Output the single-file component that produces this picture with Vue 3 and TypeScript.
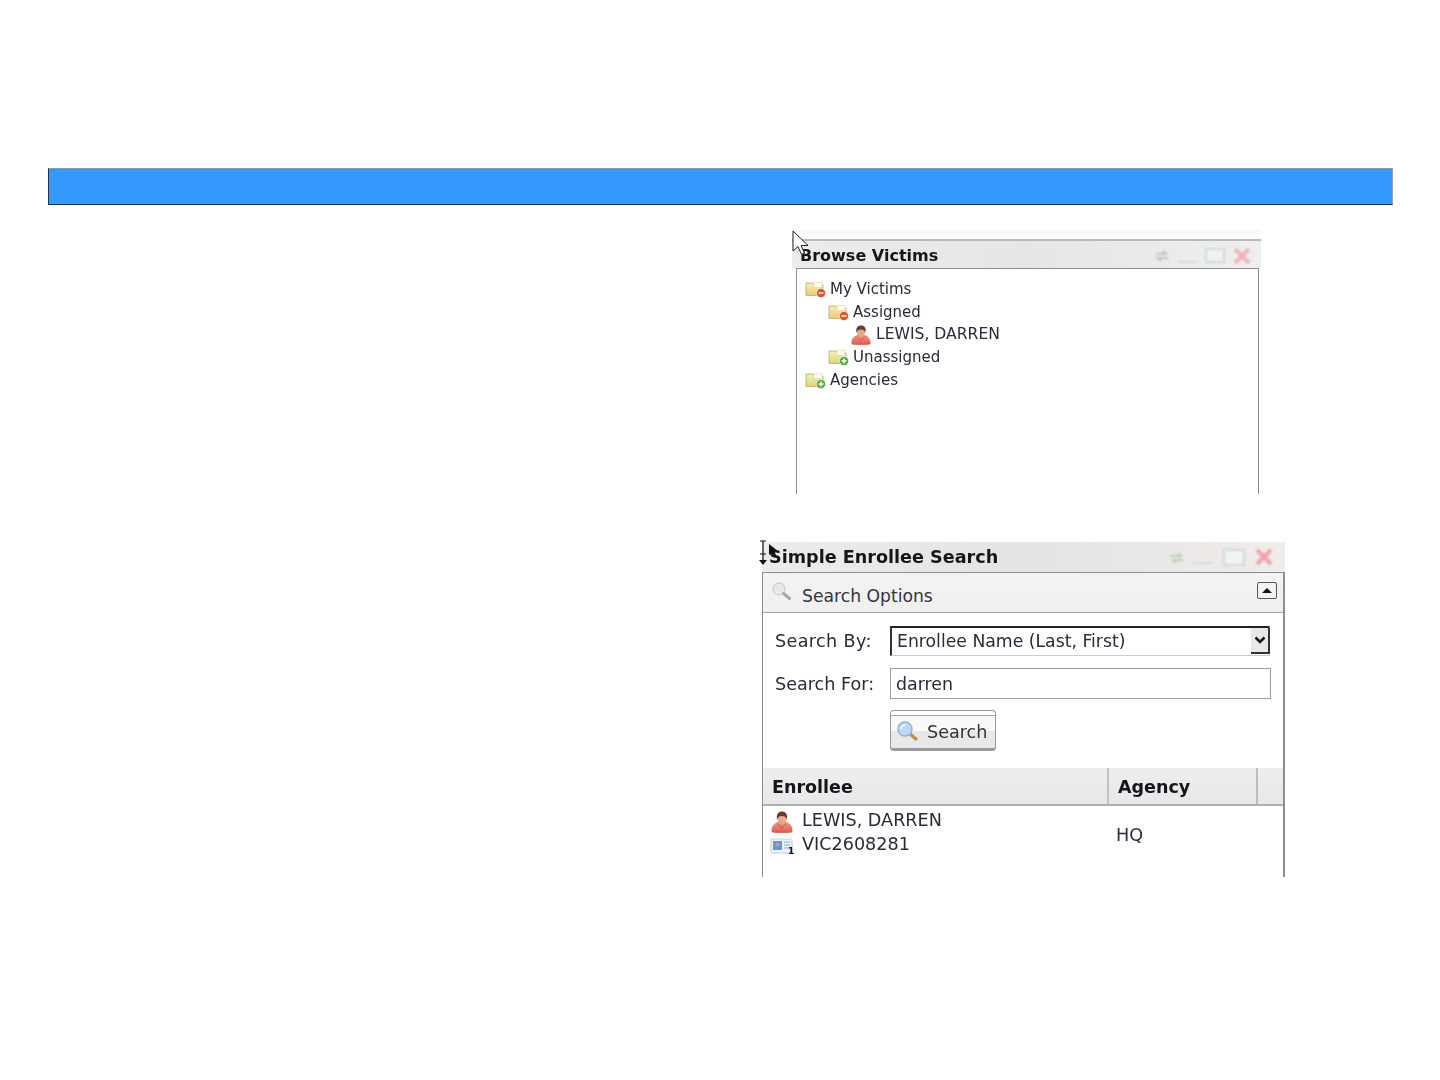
<script setup lang="ts">
interface TreeRow { label: string; level: number; icon: 'minus' | 'plus' | 'person' }
const rows: TreeRow[] = [
  { label: 'My Victims', level: 0, icon: 'minus' },
  { label: 'Assigned', level: 1, icon: 'minus' },
  { label: 'LEWIS, DARREN', level: 2, icon: 'person' },
  { label: 'Unassigned', level: 1, icon: 'plus' },
  { label: 'Agencies', level: 0, icon: 'plus' },
]
const indent = (level: number) => ({ paddingLeft: `${level * 23}px` })
</script>

<template>
  <main class="page">
    <svg class="defs" width="0" height="0" aria-hidden="true">
      <defs>
        <linearGradient id="folderWarm" x1="0" y1="0" x2="0" y2="1">
          <stop offset="0" stop-color="#f8eeb8" />
          <stop offset="1" stop-color="#f0c878" />
        </linearGradient>
        <linearGradient id="folderGreen" x1="0" y1="0" x2="0" y2="1">
          <stop offset="0" stop-color="#f2f0b4" />
          <stop offset="1" stop-color="#dcd67c" />
        </linearGradient>
        <linearGradient id="personFill" x1="0" y1="0" x2="0" y2="1">
          <stop offset="0" stop-color="#f8948a" />
          <stop offset="1" stop-color="#e0564c" />
        </linearGradient>
        <symbol id="person" viewBox="0 0 22 22">
          <path d="M1 21c-.5-5 2-8.500 6-9.500h8c4 1 6.500 4.500 6 9.500-3 1-17 1-20 0z" fill="url(#personFill)" stroke="#cf5044" stroke-width=".6" />
          <path d="M7 13l4 4 4-4" fill="none" stroke="#c8473c" stroke-width=".8" />
          <ellipse cx="11" cy="7.500" rx="4.600" ry="5.400" fill="#e4ab8a" />
          <path d="M6 8.500C5 2.500 8 .5 11 .5s6 2 5 8c-1-2.500-2-3.500-5-3.500S7 6 6 8.500z" fill="#6b3a2a" />
        </symbol>
      </defs>
    </svg>

    <div class="bar"></div>

    <section class="browse">
      <svg class="arrow-cursor" width="18" height="26" viewBox="0 0 18 26">
        <path d="M1 1v20l5-4.500 3.500 8 3-1.300-3.500-7.700H16z" fill="#fff" stroke="#222" stroke-width="1" />
      </svg>
      <header class="browse-title">
        <h2>Browse Victims</h2>
        <div class="controls">
          <svg width="16" height="14" viewBox="0 0 16 14"><path d="M2 5h10l-3-3M14 9H4l3 3" fill="none" stroke="#bfc4bf" stroke-width="2" /></svg>
          <span class="min"></span>
          <span class="max"></span>
          <svg width="18" height="16" viewBox="0 0 18 16"><path d="M2 1l14 14M16 1L2 15" stroke="#f2b0b8" stroke-width="4" /></svg>
        </div>
      </header>
      <div class="browse-body">
        <div v-for="row in rows" :key="row.label" class="tree-row" :style="indent(row.level)">
          <svg v-if="row.icon === 'person'" class="tree-person" width="20" height="20"><use href="#person" /></svg>
          <svg v-else class="tree-folder" width="21" height="18" viewBox="0 0 21 18">
            <path d="M1 3h7l1.500 2H18v10.500H1z" :fill="row.icon === 'minus' ? 'url(#folderWarm)' : 'url(#folderGreen)'" stroke="#bda862" stroke-width=".8" />
            <path d="M9 2.500h8v5H9z" fill="#fffdf2" stroke="#d8cfa8" stroke-width=".5" />
            <circle cx="16" cy="13" r="4.600" :fill="row.icon === 'minus' ? '#e0562c' : '#58a845'" stroke="#fff" stroke-width=".6" />
            <path v-if="row.icon === 'minus'" d="M13.500 13h5" stroke="#fff" stroke-width="1.400" />
            <path v-else d="M13.500 13h5M16 10.500v5" stroke="#fff" stroke-width="1.400" />
          </svg>
          <span :class="{ upper: row.icon === 'person' }">{{ row.label }}</span>
        </div>
      </div>
    </section>

    <section class="search">
      <svg class="text-cursor" width="18" height="28" viewBox="0 0 18 28">
        <path d="M1 1h6M1 14h6M4 1v20" stroke="#111" fill="none" stroke-width="1.200" />
        <path d="M0 20h8l-4 5z" fill="#111" />
        <path d="M10 4v11l3-3 2 4 2-1-2-4h4z" fill="#111" />
      </svg>
      <header class="search-title">
        <h2>Simple Enrollee Search</h2>
        <div class="controls controls-wide">
          <svg width="17" height="15" viewBox="0 0 17 15"><path d="M2 6h11l-3-3M15 10H5l3 3" fill="none" stroke="#b6d0b4" stroke-width="2" /></svg>
          <span class="min"></span>
          <span class="max"></span>
          <svg width="18" height="18" viewBox="0 0 18 18"><path d="M2 2l14 14M16 2L2 16" stroke="#eea0a6" stroke-width="4" /></svg>
        </div>
      </header>

      <div class="search-box">
        <div class="options">
          <svg class="options-icon" width="22" height="22" viewBox="0 0 22 22">
            <circle cx="8" cy="8" r="6" fill="#e6e8ea" stroke="#c4c8cc" />
            <path d="M12.500 12.500l6 5" stroke="#a8a8a8" stroke-width="3" stroke-linecap="round" />
          </svg>
          <span>Search Options</span>
          <button class="collapse" type="button" aria-label="Collapse"><i></i></button>
        </div>

        <div class="form">
          <div class="field field-by">
            <label>Search By:</label>
            <div class="select-wrap">
              <select><option>Enrollee Name (Last, First)</option></select>
              <span class="select-arrow">
                <svg width="12" height="9" viewBox="0 0 12 9"><path d="M1.500 1.500L6 6l4.500-4.500" fill="none" stroke="#111" stroke-width="2.600" /></svg>
              </span>
            </div>
          </div>
          <div class="field field-for">
            <label>Search For:</label>
            <input type="text" value="darren" />
          </div>
          <button class="search-btn" type="button">
            <svg width="24" height="24" viewBox="0 0 24 24">
              <path d="M13 13l7 6" stroke="#c98d4e" stroke-width="3.400" stroke-linecap="round" />
              <circle cx="9" cy="9" r="7" fill="#bcd8f6" stroke="#8fb4dc" stroke-width="1.500" />
              <path d="M5 9a4 4 0 0 1 4-4" stroke="#fff" stroke-width="1.500" fill="none" />
            </svg>
            <span>Search</span>
          </button>
        </div>

        <div class="table-head">
          <div class="col-enrollee">Enrollee</div>
          <div class="col-agency">Agency</div>
          <div class="col-end"></div>
        </div>
        <div class="table-row">
          <div class="cell-enrollee">
            <div class="line">
              <svg class="line-person" width="22" height="22"><use href="#person" /></svg>
              <span>LEWIS, DARREN</span>
            </div>
            <div class="line">
              <svg class="card" width="24" height="20" viewBox="0 0 24 20">
                <rect x="1" y="2" width="21" height="14" rx="1" fill="#f1f4f8" stroke="#c9ced4" />
                <rect x="3" y="4" width="9" height="9" fill="#5a9be0" />
                <circle cx="7.500" cy="7.500" r="2" fill="#d99a73" />
                <path d="M14 5h6M14 8h6M14 11h6" stroke="#7ba9d8" stroke-width="1.200" />
              </svg>
              <span>VIC2608281</span>
              <b class="count">1</b>
            </div>
          </div>
          <div class="cell-agency">HQ</div>
        </div>
      </div>
    </section>
  </main>
</template>

<style scoped>
.defs { position: absolute; }
.page {
  width: 1440px;
  height: 1080px;
  box-sizing: border-box;
  padding: 168px 47px 0 48px;
  background: #fff;
  overflow: hidden;
  font-family: "DejaVu Sans", Verdana, sans-serif;
  color: #1d1d24;
}
.bar {
  width: 1345px;
  height: 37px;
  box-sizing: border-box;
  background: #3399ff;
  border-top: 1px solid #8b99a8;
  border-left: 1px solid #14365a;
  border-bottom: 1px solid #14365a;
  border-right: 1px solid #a0a0a0;
}
h2 { margin: 0; font-weight: 700; color: #15151c; }

/* Browse window */
.browse {
  position: relative;
  width: 469px;
  height: 264px;
  margin: 25px 0 0 744px;
  filter: blur(0.55px);
  display: flex;
  flex-direction: column;
  background: linear-gradient(#f7f7f5, #fff 9px);
}
.arrow-cursor { position: absolute; left: 0; top: 0; z-index: 2; }
.browse-title {
  margin-top: 9px;
  height: 29px;
  box-sizing: border-box;
  padding: 2px 0 0 8px;
  display: flex;
  align-items: center;
  justify-content: space-between;
  border-top: 2px solid #b9b9b9;
  background: linear-gradient(90deg, #ececec, #e6e6e6 50%, #efefef);
}
.browse-title h2 { font-size: 16px; }
.controls {
  display: flex;
  align-items: center;
  gap: 8px;
  padding-right: 10px;
  filter: blur(0.8px);
}
.min { width: 19px; height: 14px; box-sizing: border-box; border-bottom: 2px solid #d6d8d6; }
.max { width: 20px; height: 15px; box-sizing: border-box; border: 2px solid #cfd8d8; background: #eef4f2; }
.controls-wide { padding-right: 12px; }
.controls-wide .min { width: 20px; }
.controls-wide .max { width: 22px; height: 17px; margin: 0 2px; }
.browse-body {
  flex: 1;
  margin: 0 2px 0 4px;
  padding: 9px 0 0 8px;
  border: 1px solid #8e8e8e;
  border-bottom: 0;
  background: #fff;
}
.tree-row {
  height: 22.7px;
  display: flex;
  align-items: center;
  gap: 4px;
  font-size: 15px;
  color: #2a2a38;
}
.tree-person { margin-right: 1px; }
.upper { font-size: 15.600px; margin-bottom: 2px; }

/* Search window */
.search {
  position: relative;
  width: 523px;
  height: 335px;
  margin: 48px 0 0 714px;
  filter: blur(0.55px);
  display: flex;
  flex-direction: column;
}
.text-cursor { position: absolute; left: -3px; top: -2px; z-index: 2; }
.search-title {
  height: 30px;
  box-sizing: border-box;
  padding-left: 7px;
  display: flex;
  align-items: center;
  justify-content: space-between;
  background: linear-gradient(90deg, #ececec, #e4e4e4 50%, #f0ecea);
}
.search-title h2 { font-size: 17.600px; }
.search-box {
  flex: 1;
  border: 1px solid #8e8e8e;
  border-right-width: 2px;
  border-bottom: 0;
  display: flex;
  flex-direction: column;
}
.options {
  height: 40px;
  box-sizing: border-box;
  display: flex;
  align-items: center;
  position: relative;
  padding: 6px 0 0 39px;
  font-size: 17.200px;
  color: #33333c;
  background: linear-gradient(#f2f3f3, #f0f0f0);
  border-bottom: 1px solid #a5a5a5;
}
.options-icon { position: absolute; left: 8px; top: 8px; }
.collapse {
  position: absolute;
  right: 6px;
  top: 9px;
  width: 20px;
  height: 17px;
  padding: 0;
  background: #f2f2f2;
  border: 1px solid #555;
  border-radius: 2px;
  display: flex;
  align-items: center;
  justify-content: center;
}
.collapse i {
  width: 0;
  height: 0;
  border-left: 5px solid transparent;
  border-right: 5px solid transparent;
  border-bottom: 5px solid #111;
}
.form {
  height: 155px;
  box-sizing: border-box;
  padding: 13px 12px 0 12px;
  display: flex;
  flex-direction: column;
}
.field { display: flex; align-items: center; font-size: 17.600px; color: #2a2a38; }
.field label { width: 115px; flex: none; }
.field-by label { letter-spacing: 0.35px; }
.field-for { margin-top: 12px; }
.select-wrap { position: relative; width: 380px; height: 30px; }
select {
  appearance: none;
  width: 100%;
  height: 100%;
  box-sizing: border-box;
  margin: 0;
  padding: 0 0 2px 5px;
  font: 17.250px "DejaVu Sans", Verdana, sans-serif;
  color: #2a2a38;
  background: #fff;
  border: 0;
  border-top: 2px solid #222;
  border-left: 2px solid #333;
  border-right: 1px solid #ccc;
  border-bottom: 1px solid #ccc;
  border-radius: 0;
}
.select-arrow {
  position: absolute;
  right: 0;
  top: 2px;
  width: 19px;
  height: 26px;
  box-sizing: border-box;
  background: #e8e8e8;
  border-right: 2px solid #333;
  border-bottom: 2px solid #333;
  display: flex;
  align-items: center;
  justify-content: center;
}
input {
  width: 381px;
  height: 31px;
  box-sizing: border-box;
  margin: 0;
  padding: 1px 5px 0;
  font: 17.400px "DejaVu Sans", Verdana, sans-serif;
  color: #2a2a38;
  border: 1px solid #9c9c9c;
  border-radius: 0;
  outline: none;
}
.search-btn {
  margin: 11px 0 0 115px;
  width: 106px;
  height: 41px;
  box-sizing: border-box;
  padding: 5px 0 0 5px;
  display: flex;
  align-items: center;
  gap: 7px;
  font: 17.600px "DejaVu Sans", Verdana, sans-serif;
  color: #33333c;
  background: linear-gradient(#fff 0 4px, #a8a8a8 4px 5px, #fafafa 5px 55%, #e7e9e8 55% 100%);
  border: 1px solid #9a9a9a;
  border-top-width: 1px;
  border-bottom-width: 3px;
  border-radius: 4px;
}
.table-head {
  height: 38px;
  flex: none;
  box-sizing: border-box;
  padding-top: 0;
  display: flex;
  font-size: 17.500px;
  font-weight: 700;
  color: #15151c;
  background: linear-gradient(#eeeeee, #e8e8e8);
  border-bottom: 2px solid #b0b0b0;
}
.table-head > div { display: flex; align-items: center; box-sizing: border-box; padding-top: 2px; }
.col-enrollee { width: 346px; padding-left: 9px; border-right: 2px solid #c2c2c2; }
.col-agency { width: 149px; padding-left: 9px; border-right: 2px solid #bdbdbd; }
.col-end { flex: 1; }
.table-row {
  flex: 1;
  display: flex;
  padding-top: 2px;
  font-size: 17.600px;
  color: #2a2a38;
}
.cell-enrollee { width: 353px; padding-left: 8px; box-sizing: border-box; }
.line {
  position: relative;
  height: 24px;
  display: flex;
  align-items: center;
  gap: 8px;
}
.line svg { flex: none; }
.line-person { margin-top: 4px; margin-right: 1px; }
.card { margin-top: 5px; margin-left: -1px; }
.count {
  position: absolute;
  left: 17px;
  top: 14px;
  font-size: 9px;
  font-weight: 700;
  color: #111;
}
.cell-agency { padding-top: 17px; }
</style>

<style>
html, body { margin: 0; background: #fff; }
</style>
